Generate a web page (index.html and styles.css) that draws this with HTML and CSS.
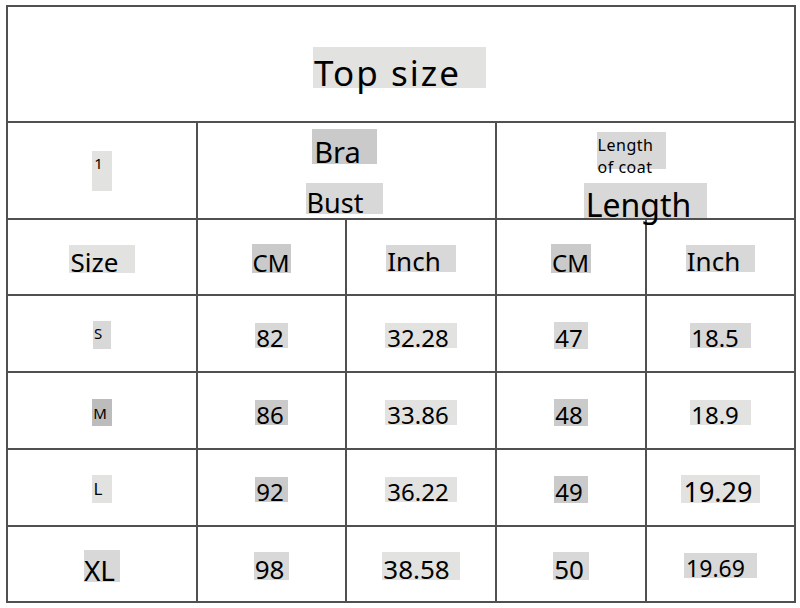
FILE: index.html
```html
<!DOCTYPE html>
<html lang="en">
<head>
<meta charset="utf-8">
<title>Top size</title>
<link rel="stylesheet" href="styles.css">
</head>
<body>
<div class="chart">
  <div class="cell title-cell span5"><span class="lbl title g1">Top size</span></div>

  <div class="cell"><span class="lbl one g1">1</span></div>
  <div class="cell stack bust-cell span2">
    <span class="lbl bra g3">Bra</span>
    <span class="lbl bust g2">Bust</span>
  </div>
  <div class="cell stack len-cell span2">
    <span class="lbl coat g2">Length<br>of coat</span>
    <span class="lbl length g2">Length</span>
  </div>

  <div class="cell data"><span class="lbl size g1">Size</span></div>
  <div class="cell data"><span class="lbl cm g3">CM</span></div>
  <div class="cell data"><span class="lbl inch g2">Inch</span></div>
  <div class="cell data"><span class="lbl cm g3">CM</span></div>
  <div class="cell data"><span class="lbl inch g2">Inch</span></div>

  <div class="cell data"><span class="lbl sz-s g2">S</span></div>
  <div class="cell data"><span class="lbl n2 g2">82</span></div>
  <div class="cell data"><span class="lbl dec g1">32.28</span></div>
  <div class="cell data"><span class="lbl n2b g2">47</span></div>
  <div class="cell data"><span class="lbl n3 g2">18.5</span></div>

  <div class="cell data"><span class="lbl sz-m g4">M</span></div>
  <div class="cell data"><span class="lbl n2 g3">86</span></div>
  <div class="cell data"><span class="lbl dec g1">33.86</span></div>
  <div class="cell data"><span class="lbl n2b g3">48</span></div>
  <div class="cell data"><span class="lbl n3 g1">18.9</span></div>

  <div class="cell data"><span class="lbl sz-l g1">L</span></div>
  <div class="cell data"><span class="lbl n2 g3">92</span></div>
  <div class="cell data"><span class="lbl dec g1">36.22</span></div>
  <div class="cell data"><span class="lbl n2b g3">49</span></div>
  <div class="cell data"><span class="lbl big5 g1">19.29</span></div>

  <div class="cell data"><span class="lbl sz-xl g2">XL</span></div>
  <div class="cell data"><span class="lbl n2l g2">98</span></div>
  <div class="cell data"><span class="lbl decl g1">38.58</span></div>
  <div class="cell data"><span class="lbl n2l g2">50</span></div>
  <div class="cell data"><span class="lbl sm5 g2">19.69</span></div>
</div>
</body>
</html>
```

FILE: styles.css
```css
html, body {
  margin: 0;
  padding: 0;
  background: #fff;
}

body {
  font-family: "Noto Sans", "Open Sans", sans-serif;
  color: #000;
}

.chart {
  margin: 5px 0 0 6px;
  width: 786px;
  padding: 2px;
  display: grid;
  grid-template-columns: 188px 147px 148px 148px 147px;
  grid-template-rows: 114px 95px 74px 75px 75px 75px 74px;
  gap: 2px;
  background: #505050;
}

.cell {
  background: #fff;
  display: flex;
  align-items: center;
  justify-content: center;
}

.span5 { grid-column: span 5; }
.span2 { grid-column: span 2; }

.data { padding-top: 3px; }

.title-cell {
  align-items: flex-start;
  padding-top: 40px;
  padding-right: 3px;
}

.stack {
  flex-direction: column;
  justify-content: flex-start;
}

.bust-cell {
  padding-top: 6px;
  padding-right: 4px;
  gap: 19px;
}

.len-cell {
  padding-top: 9px;
  gap: 14px;
  position: relative;
  z-index: 1;
}

.lbl {
  display: inline-block;
  white-space: nowrap;
}

.g1 { background: #e2e2e0; }
.g2 { background: #d8d8d8; }
.g3 { background: #cacaca; }
.g4 { background: #bcbcbc; }

.title {
  font-size: 35px;
  letter-spacing: 2px;
  line-height: 29px;
  padding: 11px 25px 1px 1px;
}

.one {
  font-size: 15px;
  line-height: 18px;
  padding: 3px 9px 19px 2px;
}

.bra {
  font-size: 29px;
  line-height: 24px;
  padding: 11px 16px 0 2px;
}

.bust {
  font-size: 27px;
  line-height: 23px;
  padding: 8px 20px 0 1px;
}

.coat {
  font-size: 16px;
  letter-spacing: 0.5px;
  line-height: 22px;
  height: 37px;
  box-sizing: border-box;
  padding: 2px 13px 0 1px;
  margin-right: 28px;
  white-space: normal;
}

.length {
  font-size: 32px;
  line-height: 26px;
  padding: 9px 16px 0 2px;
}

.size {
  font-size: 26px;
  line-height: 22px;
  padding: 6px 17px 0 2px;
}

.cm {
  font-size: 24px;
  line-height: 21px;
  padding: 8px 2px 0 1px;
}

.inch {
  font-size: 26px;
  line-height: 22px;
  padding: 5px 15px 0 1px;
}

.sz-s {
  font-size: 15px;
  line-height: 18px;
  padding: 3px 9px 7px 1px;
}

.sz-m {
  font-size: 15px;
  line-height: 18px;
  padding: 5px 5px 4px 1px;
}

.sz-l {
  font-size: 17px;
  line-height: 18px;
  padding: 5px 10px 5px 2px;
}

.sz-xl {
  font-size: 28px;
  line-height: 24px;
  padding: 8px 5px 0 0;
}

.n2 {
  font-size: 24px;
  line-height: 21px;
  padding: 4px 4px 0 1px;
}

.n2b {
  font-size: 24px;
  line-height: 21px;
  padding: 5px 5px 1px 1px;
}

.dec {
  font-size: 24px;
  line-height: 21px;
  padding: 4px 8px 0 2px;
}

.n3 {
  font-size: 24px;
  line-height: 21px;
  padding: 4px 12px 0 1px;
}

.n2l {
  font-size: 26px;
  line-height: 22px;
  padding: 6px 5px 0 1px;
}

.decl {
  font-size: 26px;
  line-height: 22px;
  padding: 6px 10px 0 1px;
}

.big5 {
  font-size: 27px;
  line-height: 23px;
  padding: 5px 7px 0 2px;
}

.sm5 {
  font-size: 23px;
  line-height: 20px;
  padding: 5px 12px 0 2px;
}
```
